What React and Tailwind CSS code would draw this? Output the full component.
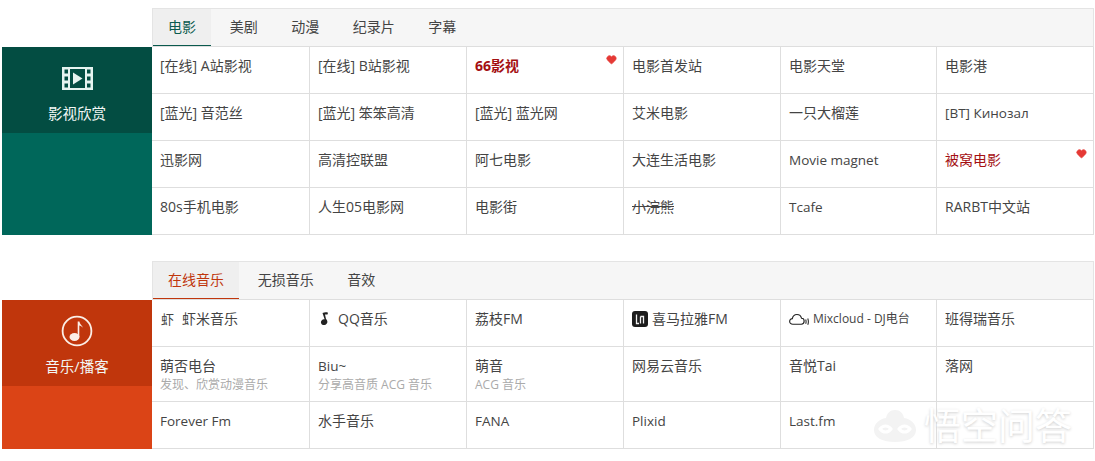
import { Heart } from "lucide-react";

const font = { fontFamily: '"Open Sans", "Noto Sans CJK SC", sans-serif' };

const FilmIcon = () => (
  <svg width="31" height="23" viewBox="0 0 31 23" className="text-[#e6f4f0]">
    <path
      fill="currentColor"
      fillRule="evenodd"
      d="M0 0h31v23H0V0ZM2.500 2.500v4h3.500v-4H2.500Zm0 7v4h3.500v-4H2.500Zm0 7v4h3.500v-4H2.500ZM25 2.500v4h3.500v-4H25Zm0 7v4h3.500v-4H25Zm0 7v4h3.500v-4H25ZM8 2v19h15V2H8Z"
    />
    <path fill="currentColor" d="M11 5.500 20.500 11.500 11 17.500V5.500Z" />
  </svg>
);

const NoteIcon = () => (
  <svg width="32" height="32" viewBox="0 0 32 32" className="text-[#fbeee6]">
    <circle cx="16" cy="16" r="14.400" fill="none" stroke="currentColor" strokeWidth="1.800" />
    <ellipse cx="13.500" cy="22" rx="5" ry="4" fill="currentColor" />
    <path fill="currentColor" d="M16.700 6.500h1.700c.4 2.800 2.500 3.700 3.600 6.200-1-1-2.500-1.900-3.700-2.100V22h-1.600V6.500Z" />
  </svg>
);

const XiamiIcon = () => (
  <span className="ml-px mr-2 text-[13px] leading-none text-[#444]">虾</span>
);

const QQIcon = () => (
  <svg width="11" height="14" viewBox="0 0 10 14" className="ml-px mr-2 text-[#222]">
    <path fill="currentColor" d="M3 1c2-.8 4-.8 5.500-.3L8 2.400 5.500 2.600l1 4.400c2.300 1.800 1.800 5.500-1.500 6-2.800.4-4.600-2.600-2.900-4.600.9-1 2.200-1.300 3.100-1L3 1Z" />
  </svg>
);

const XimaIcon = () => (
  <svg width="16" height="16" viewBox="0 0 16 16" className="mr-1">
    <rect width="16" height="16" rx="3" fill="#1c1c1c" />
    <path fill="none" stroke="#f2f2f2" strokeWidth="1.300" d="M4.500 3.500v9h2.500M8.500 12.500V5.500M8.500 5.500h3v7" />
  </svg>
);

const CloudIcon = () => (
  <svg width="20" height="13" viewBox="0 0 21 13" className="mr-1 text-[#222]">
    <path
      fill="none"
      stroke="currentColor"
      strokeWidth="1.200"
      d="M4 11.500C2 11.500.700 10.200.700 8.500S2 5.600 3.500 5.600C4 3 6 1.200 8.300 1.200c2.500 0 4.400 1.800 4.900 4 1.500 0 2.700 1.300 2.700 3 0 1.800-1.300 3.300-3 3.300H4Z"
    />
    <path fill="none" stroke="currentColor" strokeWidth="1.100" d="M17.500 6.500c.6 1.500.6 3 0 4.500M19.700 5.500c.8 2 .8 4.500 0 6.500" />
  </svg>
);

const movies = [
  { name: "[在线] A站影视" },
  { name: "[在线] B站影视" },
  { name: "66影视", hot: true, bold: true },
  { name: "电影首发站" },
  { name: "电影天堂" },
  { name: "电影港" },
  { name: "[蓝光] 音范丝" },
  { name: "[蓝光] 笨笨高清" },
  { name: "[蓝光] 蓝光网" },
  { name: "艾米电影" },
  { name: "一只大榴莲" },
  { name: "[BT] Кинозал" },
  { name: "迅影网" },
  { name: "高清控联盟" },
  { name: "阿七电影" },
  { name: "大连生活电影" },
  { name: "Movie magnet" },
  { name: "被窝电影", hot: true, red: true },
  { name: "80s手机电影" },
  { name: "人生05电影网" },
  { name: "电影街" },
  { name: "小浣熊", strike: true },
  { name: "Tcafe" },
  { name: "RARBT中文站" },
];

const music = [
  { name: "虾米音乐", icon: <XiamiIcon /> },
  { name: "QQ音乐", icon: <QQIcon /> },
  { name: "荔枝FM" },
  { name: "喜马拉雅FM", icon: <XimaIcon /> },
  { name: "Mixcloud - DJ电台", icon: <CloudIcon />, small: true },
  { name: "班得瑞音乐" },
  { name: "萌否电台", sub: "发现、欣赏动漫音乐" },
  { name: "Biu~", sub: "分享高音质 ACG 音乐" },
  { name: "萌音", sub: "ACG 音乐" },
  { name: "网易云音乐" },
  { name: "音悦Tai" },
  { name: "落网" },
  { name: "Forever Fm" },
  { name: "水手音乐" },
  { name: "FANA" },
  { name: "Plixid" },
  { name: "Last.fm" },
  { name: "" },
];

const hasCjk = (text) => /[\u4e00-\u9fff]/.test(text);

const Cell = ({ item, index }) => (
  <div
    className={`relative border-b border-[#dedede] pl-2 pr-1 pt-[9px] ${
      index % 6 === 5 ? "" : "border-r"
    }`}
  >
    <div
      className={`flex items-center leading-5 ${hasCjk(item.name) ? "text-sm" : "text-[13.500px]"} ${
        item.bold ? "font-bold text-[#a40f12]" : item.red ? "text-[#a40f12]" : "text-[#444]"
      } ${item.strike ? "line-through" : ""}`}
    >
      {item.icon}
      <span className={item.small ? "text-xs leading-5" : ""}>{item.name}</span>
    </div>
    {item.sub && <div className="text-xs leading-[18px] text-[#aaa]">{item.sub}</div>}
    {item.hot && (
      <Heart size={11} fill="#e53935" stroke="#e53935" className="absolute right-1.5 top-[7px]" />
    )}
  </div>
);

const Section = ({ tabs, items, rows, icon, title, dark, light, accent, tabWidth }) => (
  <section className="flex items-stretch pl-0.5">
    <div className="flex w-[150px] shrink-0 flex-col pt-[39px]">
      <div
        className={`flex h-[86px] flex-col items-center pt-[15px] text-[14.500px] leading-5 text-[#f2f7f5] ${dark}`}
      >
        <div className="flex h-8 items-center">{icon}</div>
        <div className="mt-[10px]">{title}</div>
      </div>
      <div className={`flex-1 ${light}`} />
    </div>
    <div className="w-[942px] shrink-0">
      <div className="flex h-[39px] border border-[#e4e4e4] border-b-[#dedede] bg-[#f6f6f6] text-sm text-[#444]">
        {tabs.map((tab, index) =>
          index === 0 ? (
            <div
              key={tab}
              className={`mr-0.5 flex items-center justify-center border-b pb-px bg-[#efefef] ${tabWidth} ${accent}`}
            >
              {tab}
            </div>
          ) : (
            <div key={tab} className="flex items-center px-[16.750px] pb-0.5">
              {tab}
            </div>
          ),
        )}
      </div>
      <div className={`grid grid-cols-[158px_157px_157px_157px_156px_156px] border-r border-[#dedede] ${rows}`}>
        {items.map((item, index) => (
          <Cell item={item} index={index} key={index} />
        ))}
      </div>
    </div>
  </section>
);

export default function App() {
  return (
    <div className="relative h-[461px] w-[1095px] overflow-hidden bg-white pt-2" style={font}>
      <Section
        tabs={["电影", "美剧", "动漫", "纪录片", "字幕"]}
        items={movies}
        rows="grid-rows-[47px_47px_47px_47px]"
        icon={<FilmIcon />}
        title="影视欣赏"
        dark="bg-[#034d42]"
        light="bg-[#00675a]"
        accent="border-b-[#0a5a4e] text-[#0a5a4e]"
        tabWidth="w-[58px]"
      />
      <div className="h-[26px]" />
      <Section
        tabs={["在线音乐", "无损音乐", "音效"]}
        items={music}
        rows="grid-rows-[47px_55px_47px]"
        icon={<NoteIcon />}
        title="音乐/播客"
        dark="bg-[#c0360c]"
        light="bg-[#db4416]"
        accent="border-b-[#c0360c] text-[#c0360c]"
        tabWidth="w-[86px]"
      />
      {/* watermark sits over the table */}
      <div className="absolute left-[872px] top-[406px] flex items-center text-white [text-shadow:0_1px_3px_#cfcfcf]">
        <svg width="46" height="36" viewBox="0 0 46 36">
          <path
            fill="#f3f3f3"
            d="M23 2c5 0 8 3 9 8 7 1 12 6 12 12 0 8-9 12-21 12S2 30 2 22c0-6 5-11 12-12 1-5 4-8 9-8Z"
          />
          <path
            fill="none"
            stroke="#fff"
            strokeWidth="3"
            d="M8 21c3-4 8-4 11 0-3 4-8 4-11 0ZM27 21c3-4 8-4 11 0-3 4-8 4-11 0Z"
          />
        </svg>
        <span className="ml-[6px] text-[37px] leading-10">悟空问答</span>
      </div>
    </div>
  );
}
